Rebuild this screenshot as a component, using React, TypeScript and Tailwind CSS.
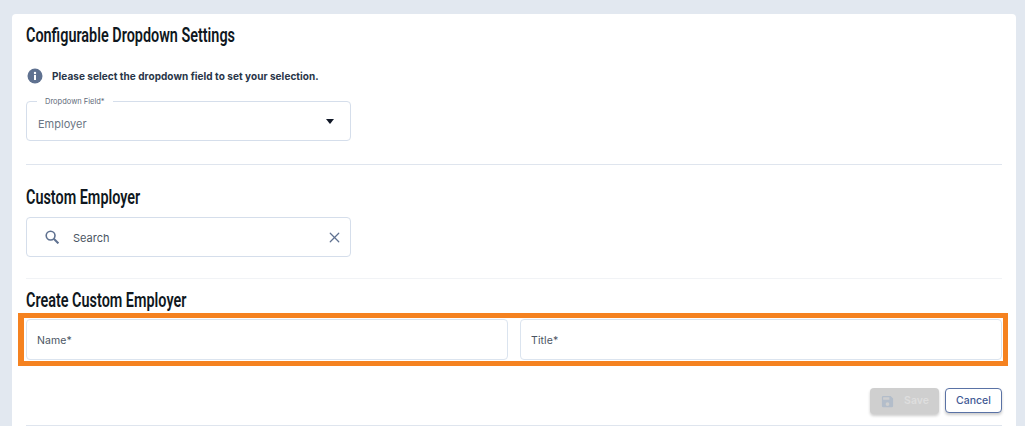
import { X } from 'lucide-react';

function Heading({ children, className }: { children: string; className: string }) {
  return (
    <h2
      className={`origin-left scale-x-[0.72] whitespace-nowrap font-['Roboto',sans-serif] text-[20px] font-semibold leading-[22px] text-[#0f1720] ${className}`}
    >
      {children}
    </h2>
  );
}

function TextField({ label }: { label: string }) {
  return (
    <div className="flex h-[41px] flex-1 items-center rounded border border-[#dbe4ef] bg-white px-[10px] pt-[3px] text-[10.5px] tracking-[0.1px] text-[#4b5563]">
      {label}
    </div>
  );
}

export default function App() {
  return (
    <div className="h-[426px] overflow-hidden bg-[#e2e8f0] pl-3 pr-[9px] pt-[14px] font-['Inter',sans-serif]">
      <div className="h-[440px] rounded-t bg-white px-[14px] pt-[10px]">
        <Heading className="">Configurable Dropdown Settings</Heading>

        <div className="mt-[18px] flex h-6 items-center gap-[9px] pl-[1px]">
          <svg viewBox="0 0 16 16" className="h-[16px] w-[16px]">
            <circle cx="8" cy="8" r="7.5" fill="#5f7190" />
            <rect x="7" y="7" width="2" height="5" fill="#fff" />
            <circle cx="8" cy="5" r="1.2" fill="#fff" />
          </svg>
          <span className="text-[10px] font-bold tracking-[0.05px] text-[#293548]">
            Please select the dropdown field to set your selection.
          </span>
        </div>

        <div className="relative mt-[13px] flex h-10 w-[325px] items-center justify-between rounded border border-[#d5deeb] pl-[11px] pr-[16px] text-[11px] text-[#6b7684]">
          <span className="absolute -top-[5px] left-[10px] bg-white px-2 text-[7.5px] leading-[10px] text-[#5f6b7a]">
            Dropdown Field*
          </span>
          <span className="pt-[6px]">Employer</span>
          <svg viewBox="0 0 8 5" className="h-[5px] w-[8px] fill-[#111827]">
            <path d="M0 0h8L4 5z" />
          </svg>
        </div>

        <hr className="mt-[23px] border-t border-[#dfe5ee]" />

        <Heading className="mt-[21px]">Custom Employer</Heading>

        <div className="mt-[9px] flex h-10 w-[325px] items-center rounded border border-[#d5deeb] pl-[18px] pr-[7px] text-[11px] text-[#4b5563]">
          <svg viewBox="0 0 14 14" className="h-[14px] w-[14px] fill-none stroke-[#5f7190] stroke-[1.6]">
            <circle cx="5.6" cy="5.6" r="4.4" />
            <path d="M8.8 8.8 13.4 13.4" strokeWidth="2" />
          </svg>
          <span className="ml-[14px] flex-1 pt-[2px]">Search</span>
          <X className="h-[17px] w-[17px] text-[#5f7190]" strokeWidth={1.7} />
        </div>

        <hr className="mt-[21px] border-t border-[#f1f3f6]" />

        <Heading className="mt-[10px]">Create Custom Employer</Heading>

        <div className="-ml-2 -mr-[6px] mt-[2px] flex gap-[12px] border-y-[5px] border-l-[6px] border-r-[5px] border-[#f58220] py-[1px] pl-[2px] pr-[1px]">
          <TextField label="Name*" />
          <TextField label="Title*" />
        </div>

        <div className="mt-[22px] flex items-start justify-end gap-[6px]">
          <button className="flex h-[26px] w-[69px] items-center justify-center gap-[9px] rounded bg-[#cfcfcf] text-[10.5px] font-semibold text-[#dedede] shadow-[0_2px_3px_rgba(0,0,0,0.2)]">
            <svg viewBox="0 0 24 24" className="h-[15px] w-[15px] fill-[#b3bdca]">
              <path d="M17 3H5a2 2 0 0 0-2 2v14a2 2 0 0 0 2 2h14a2 2 0 0 0 2-2V7zm-5 16a3 3 0 1 1 0-6 3 3 0 0 1 0 6zm3-10H5V5h10z" />
            </svg>
            Save
          </button>
          <button className="h-[25px] w-[57px] rounded border border-[#5a72a5] bg-white text-[10.5px] font-medium text-[#3f5a94] shadow-[0_2px_3px_rgba(0,0,0,0.2)]">
            Cancel
          </button>
        </div>

        <hr className="mt-[11px] border-t border-[#dfe5ee]" />
      </div>
    </div>
  );
}
